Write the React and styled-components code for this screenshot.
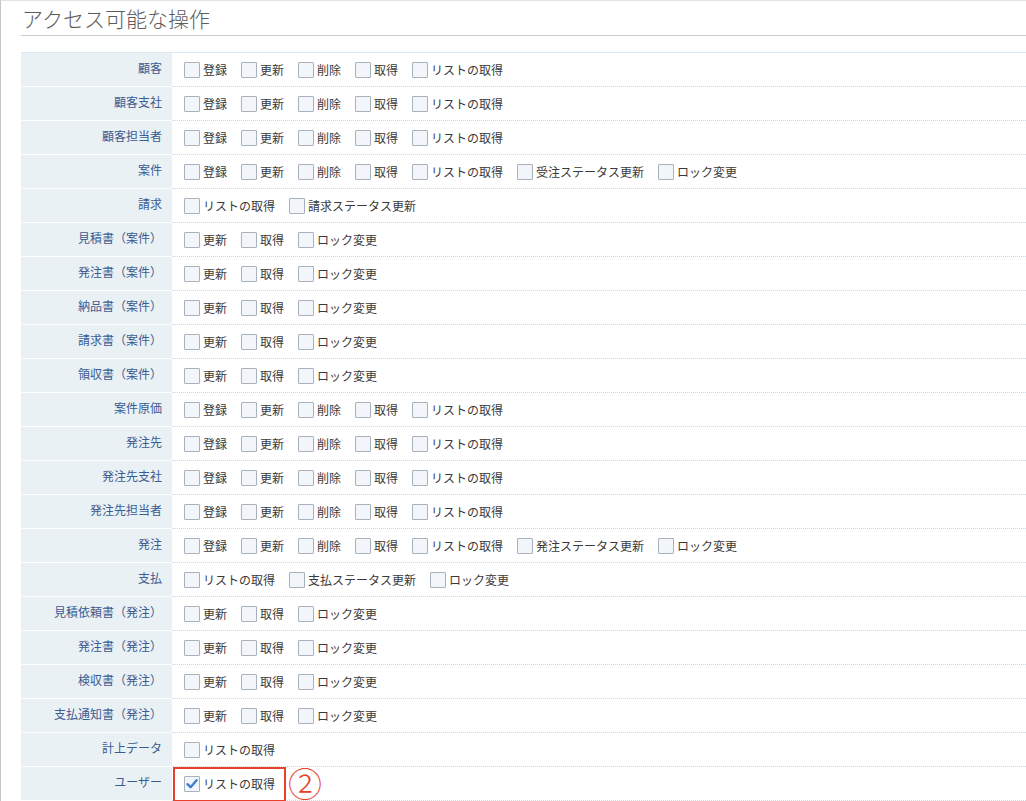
import React from "react";
import styled, { createGlobalStyle } from "styled-components";

const Global = createGlobalStyle`
  html, body { margin: 0; padding: 0; background: #fff; overflow: hidden; }
  body { font-family: "Noto Sans CJK JP", "Noto Sans", sans-serif; }
`;

const Page = styled.div`
  width: 1026px;
  height: 801px;
  box-sizing: border-box;
  border-top: 1px solid #e4e4e4;
  border-left: 1px solid #c6c6c6;
  padding-left: 20px;
  overflow: hidden;
`;

const Heading = styled.h2`
  margin: 0;
  height: 34px;
  line-height: 34px;
  font-size: 21px;
  font-weight: 300;
  color: #5c5c5c;
  padding-left: 1px;
  border-bottom: 1px solid #cbcbcb;
`;

const Table = styled.div`
  margin-top: 16px;
  border-top: 1px solid #dbe7f2;
  display: flex;
  flex-direction: column;
`;

const Row = styled.div`
  display: flex;
  height: 34px;
`;

const Label = styled.div`
  width: 151px;
  flex: none;
  box-sizing: border-box;
  background: #e9f1f5;
  border-bottom: 1px solid #fff;
  text-align: right;
  padding: 7px 10px 0 0;
  font-size: 12px;
  line-height: 16px;
  color: #3b5c92;
`;

const Value = styled.div`
  position: relative;
  flex: 1;
  box-sizing: border-box;
  display: flex;
  align-items: center;
  padding-left: 12px;
  border-bottom: 1px dotted #c9d9e6;
`;

const Item = styled.label`
  display: flex;
  align-items: center;
  margin-right: 14px;
  font-size: 12px;
  color: #3a3a3a;
  white-space: nowrap;
`;

const Box = styled.span`
  width: 16px;
  height: 16px;
  box-sizing: border-box;
  border: 1px solid #a8b2bc;
  border-radius: 1px;
  background: #f2f6fa;
  margin-right: 3px;
  display: flex;
  align-items: center;
  justify-content: center;
`;

const Highlight = styled.div`
  position: absolute;
  left: 1px;
  top: 0;
  width: 113px;
  height: 35px;
  box-sizing: border-box;
  border: 2px solid #e8412b;
  pointer-events: none;
`;

const Marker = styled.span`
  position: absolute;
  left: 116px;
  top: -2px;
  font-size: 34px;
  line-height: 36px;
  color: #e8412b;
  font-family: "Noto Sans CJK JP", sans-serif;
  font-weight: 300;
`;

const Check = () => (
  <svg width="14" height="14" viewBox="0 0 14 14">
    <path d="M2.5 7.2 L5.6 10.2 L11.6 3.2" fill="none" stroke="#3b7fcf" strokeWidth="2.4" strokeLinecap="round" strokeLinejoin="round" />
  </svg>
);

const FIVE = ["登録", "更新", "削除", "取得", "リストの取得"];
const DOC = ["更新", "取得", "ロック変更"];

const rows = [
  ["顧客", FIVE],
  ["顧客支社", FIVE],
  ["顧客担当者", FIVE],
  ["案件", [...FIVE, "受注ステータス更新", "ロック変更"]],
  ["請求", ["リストの取得", "請求ステータス更新"]],
  ["見積書（案件）", DOC],
  ["発注書（案件）", DOC],
  ["納品書（案件）", DOC],
  ["請求書（案件）", DOC],
  ["領収書（案件）", DOC],
  ["案件原価", FIVE],
  ["発注先", FIVE],
  ["発注先支社", FIVE],
  ["発注先担当者", FIVE],
  ["発注", [...FIVE, "発注ステータス更新", "ロック変更"]],
  ["支払", ["リストの取得", "支払ステータス更新", "ロック変更"]],
  ["見積依頼書（発注）", DOC],
  ["発注書（発注）", DOC],
  ["検収書（発注）", DOC],
  ["支払通知書（発注）", DOC],
  ["計上データ", ["リストの取得"]],
  ["ユーザー", ["リストの取得"], true],
];

export default function App() {
  return (
    <>
      <Global />
      <Page>
        <Heading>アクセス可能な操作</Heading>
        <Table>
          {rows.map(([name, items, checked]) => (
            <Row key={name}>
              <Label>{name}</Label>
              <Value>
                {items.map((it) => (
                  <Item key={it}>
                    <Box>{checked && <Check />}</Box>
                    {it}
                  </Item>
                ))}
                {checked && (
                  <>
                    <Highlight />
                    <Marker>②</Marker>
                  </>
                )}
              </Value>
            </Row>
          ))}
        </Table>
      </Page>
    </>
  );
}
